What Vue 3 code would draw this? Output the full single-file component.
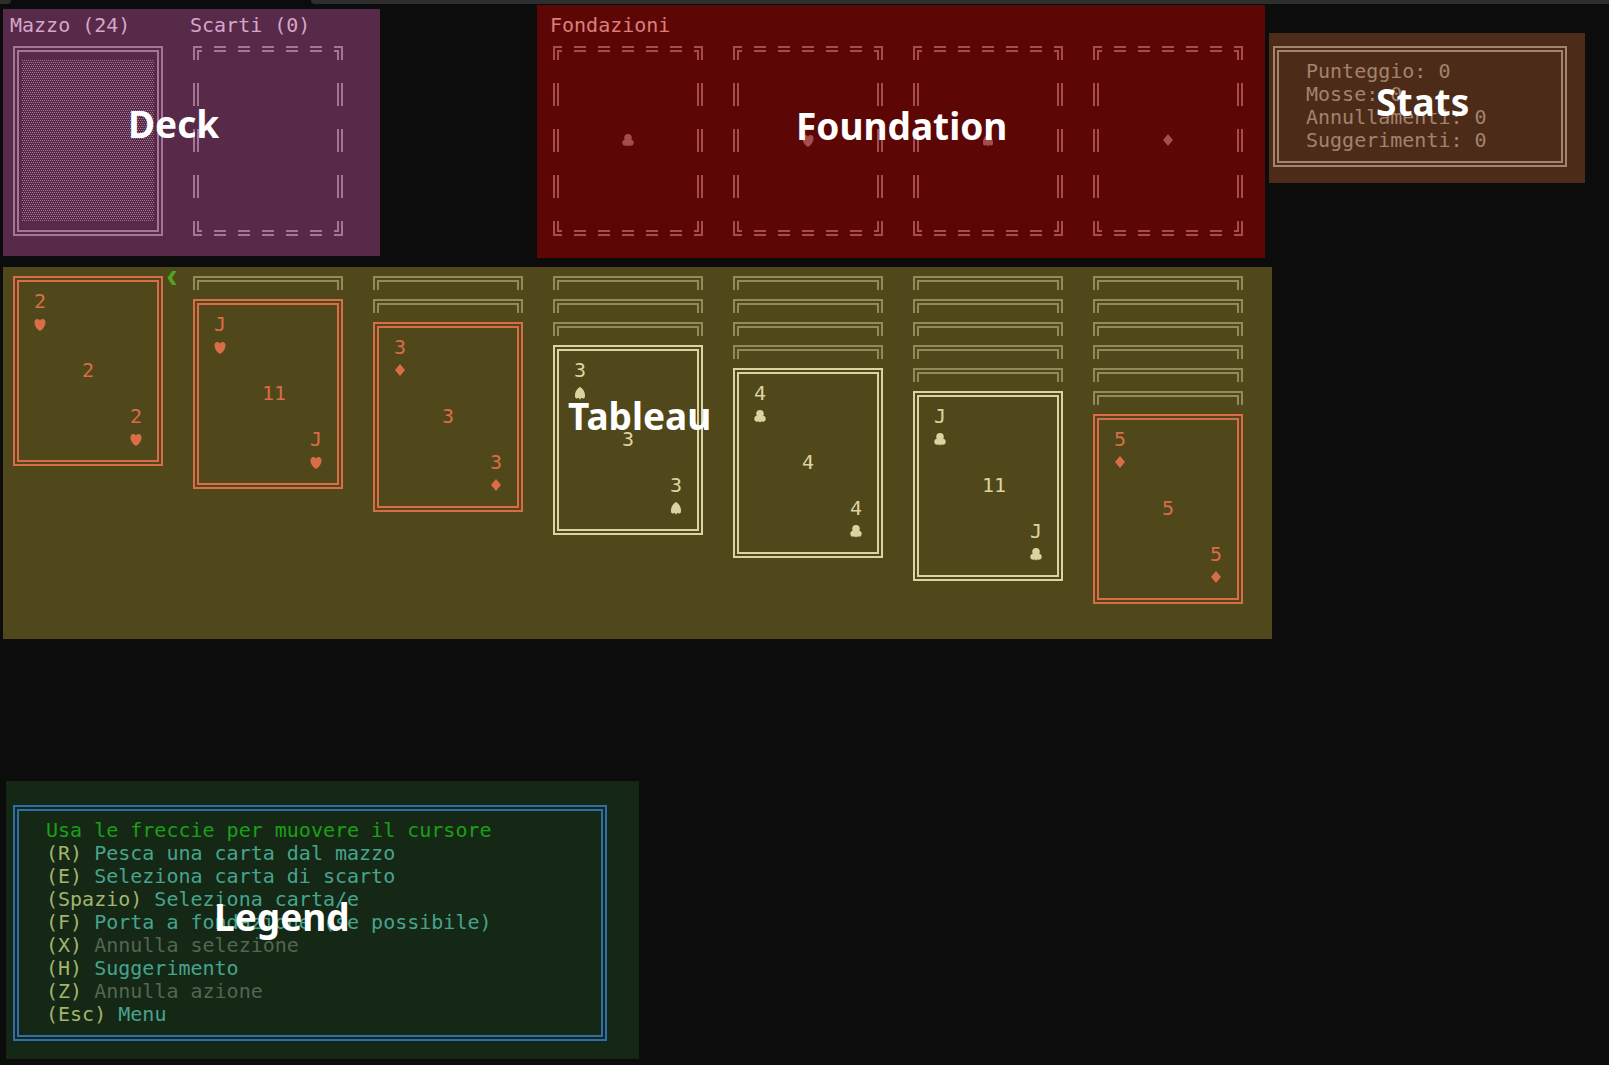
<script setup>
const foundations = ['club', 'heart', 'spade', 'diamond']

const columns = [
  { hidden: 0, rank: '2', value: '2', suit: 'heart' },
  { hidden: 1, rank: 'J', value: '11', suit: 'heart' },
  { hidden: 2, rank: '3', value: '3', suit: 'diamond' },
  { hidden: 3, rank: '3', value: '3', suit: 'spade' },
  { hidden: 4, rank: '4', value: '4', suit: 'club' },
  { hidden: 5, rank: 'J', value: '11', suit: 'club' },
  { hidden: 6, rank: '5', value: '5', suit: 'diamond' },
]

const stats = [
  ['Punteggio', 0],
  ['Mosse', 0],
  ['Annullamenti', 0],
  ['Suggerimenti', 0],
]

const commands = [
  { key: 'R', text: 'Pesca una carta dal mazzo' },
  { key: 'E', text: 'Seleziona carta di scarto' },
  { key: 'Spazio', text: 'Seleziona carta/e' },
  { key: 'F', text: 'Porta a fondazione (se possibile)' },
  { key: 'X', text: 'Annulla selezione', off: true },
  { key: 'H', text: 'Suggerimento' },
  { key: 'Z', text: 'Annulla azione', off: true },
  { key: 'Esc', text: 'Menu' },
]

const isRed = (suit) => suit === 'heart' || suit === 'diamond'

// Outline of an empty pile: double-line corners joined by dashes
const slotPath = [
  'M0 0H9V2H2V14H0ZM4 4H9V6H6V14H4Z',
  'M150 0H141V2H148V14H150ZM146 4H141V6H144V14H146Z',
  'M0 190H9V188H2V175H0ZM4 186H9V184H6V175H4Z',
  'M150 190H141V188H148V175H150ZM146 186H141V184H144V175H146Z',
  ...[21, 45, 69, 93, 117].flatMap((x) => [0, 4, 184, 188].map((y) => `M${x} ${y}h12v2h-12Z`)),
  ...[37, 83, 129].flatMap((y) => [0, 4, 144, 148].map((x) => `M${x} ${y}h2v23h-2Z`)),
].join('')

const suitPaths = {
  heart: 'M6 18C4.500 17.200 .5 14 .5 9.500C.5 7.200 1.600 6 3.200 6C4.600 6 5.600 6.600 6 7.600C6.400 6.600 7.400 6 8.800 6C10.400 6 11.500 7.200 11.500 9.500C11.500 14 7.500 17.200 6 18Z',
  diamond: 'M6 5L11 11L6 17L1 11Z',
  spade: 'M6 5C8.500 6.300 11 9.300 11 13.500C11 15.700 10.600 16.500 9.400 16.500C8.400 16.500 7.600 16.200 7 15.800L6.700 17.300H5.300L5 15.800C4.400 16.200 3.600 16.500 2.600 16.500C1.400 16.500 1 15.700 1 13.500C1 9.300 3.500 6.300 6 5Z',
  club: 'M2.200 8.800a3.800 3.800 0 1 1 7.600 0a3.800 3.800 0 1 1 -7.600 0ZM.3 13.700a3 3 0 1 1 6 0a3 3 0 1 1 -6 0ZM5.700 13.700a3 3 0 1 1 6 0a3 3 0 1 1 -6 0ZM5.300 12h1.400v5.200h-1.400Z',
}
</script>

<template>
  <div class="terminal">
    <div class="tabs"><span class="tab tab-left"></span><span class="tab tab-right"></span></div>

    <div class="top">
      <section class="panel deck">
        <div class="pile">
          <h2>Mazzo (24)</h2>
          <div class="card back">
            <svg class="weave">
              <defs>
                <pattern id="weave" width="2" height="4" patternUnits="userSpaceOnUse">
                  <path d="M0 0h1v1h-1ZM1 2h1v1h-1Z" />
                </pattern>
              </defs>
              <rect width="100%" height="100%" fill="url(#weave)" />
            </svg>
          </div>
        </div>
        <div class="pile">
          <h2>Scarti (0)</h2>
          <svg class="slot" viewBox="0 0 150 190"><path :d="slotPath" /></svg>
        </div>
        <strong class="tag">Deck</strong>
      </section>

      <section class="panel foundation">
        <h2>Fondazioni</h2>
        <div class="slots">
          <svg v-for="suit in foundations" :key="suit" class="slot" viewBox="0 0 150 190">
            <path :d="slotPath" />
            <path :d="suitPaths[suit]" transform="translate(69 83)" />
          </svg>
        </div>
        <strong class="tag">Foundation</strong>
      </section>

      <section class="panel stats">
        <ul class="frame">
          <li v-for="[name, count] in stats" :key="name">{{ name }}: {{ count }}</li>
        </ul>
        <strong class="tag">Stats</strong>
      </section>
    </div>

    <section class="panel tableau">
      <div v-for="(column, i) in columns" :key="i" class="column">
        <div v-for="n in column.hidden" :key="n" class="covered"></div>
        <div class="card face" :class="{ red: isRed(column.suit) }">
          <div class="corner">
            <span>{{ column.rank }}</span>
            <svg class="suit" viewBox="0 0 12 23"><path :d="suitPaths[column.suit]" /></svg>
          </div>
          <div class="value">{{ column.value }}</div>
          <div class="corner end">
            <span>{{ column.rank }}</span>
            <svg class="suit" viewBox="0 0 12 23"><path :d="suitPaths[column.suit]" /></svg>
          </div>
        </div>
        <svg v-if="i === 0" class="cursor" viewBox="0 0 12 23">
          <path d="M1.500 11L6 4H10.500L6 11L10.500 18H6Z" />
        </svg>
      </div>
      <strong class="tag">Tableau</strong>
    </section>

    <section class="panel legend">
      <ul class="frame">
        <li class="hint">Usa le freccie per muovere il cursore</li>
        <li v-for="c in commands" :key="c.key" :class="{ off: c.off }">
          <kbd>({{ c.key }})</kbd> {{ c.text }}
        </li>
      </ul>
      <strong class="tag">Legend</strong>
    </section>
  </div>
</template>

<style>
body {
  background: #0c0c0c;
}
</style>

<style scoped>
.terminal {
  display: flex;
  flex-direction: column;
  box-sizing: border-box;
  min-height: 100vh;
  padding-bottom: 6px;
  background: #0c0c0c;
  font: 20px/23px "DejaVu Sans Mono", "Liberation Mono", monospace;
}
.tabs {
  display: flex;
  gap: 300px;
  height: 4px;
}
.tab {
  background: #2e2e2e;
}
.tab-left {
  width: 11px;
  border-bottom-right-radius: 4px;
}
.tab-right {
  flex: 1;
  border-bottom-left-radius: 4px;
}
.top {
  display: flex;
  align-items: flex-start;
  padding-left: 3px;
}
.panel {
  position: relative;
  box-sizing: border-box;
  width: max-content;
}
h2 {
  margin: 0 0 9px;
  font: inherit;
  white-space: nowrap;
}
ul {
  margin: 0;
  padding: 0;
  list-style: none;
}
li {
  white-space: nowrap;
}
kbd {
  font: inherit;
}
svg {
  display: block;
  fill: currentColor;
}
.tag {
  position: absolute;
  color: #fff;
  font: bold 37px/40px "Noto Sans", "Open Sans", sans-serif;
}

.card {
  box-sizing: border-box;
  width: 150px;
  height: 190px;
  border: 6px double;
}
.slot {
  width: 150px;
  height: 190px;
}
.frame {
  border: 6px double;
  padding: 8px 0 9px 27px;
}

.deck {
  display: flex;
  margin-top: 5px;
  padding: 5px 10px 20px 7px;
  background: #562a48;
  color: #a47694;
}
.deck .pile {
  width: 180px;
}
.deck h2 {
  color: #d6a5c9;
}
.deck .card,
.deck .slot {
  margin-left: 3px;
}
.back {
  padding: 8px 3px 9px;
}
.weave {
  width: 100%;
  height: 100%;
  shape-rendering: crispEdges;
}
.deck .tag {
  left: 125px;
  top: 95px;
}

.foundation {
  margin: 1px 4px 0 157px;
  padding: 9px 22px 22px 13px;
  background: #5d0606;
  color: #a64c4b;
}
.foundation h2 {
  color: #db7f7a;
}
.slots {
  display: flex;
  gap: 30px;
  padding-left: 3px;
}
.foundation .tag {
  left: 259px;
  top: 101px;
}

.stats {
  margin-top: 29px;
  padding: 13px 18px 16px 4px;
  background: #4c2c19;
  color: #a3836c;
}
.stats .frame {
  padding-right: 74px;
}
.stats .tag {
  left: 107px;
  top: 49px;
}

.tableau {
  display: flex;
  gap: 30px;
  margin: 9px 0 0 3px;
  padding: 9px 29px 35px 10px;
  background: #50481a;
  color: #ddd3a1;
}
.column {
  position: relative;
}
.covered {
  height: 8px;
  margin-bottom: 9px;
  border: 6px double #95895a;
  border-bottom: 0;
}
.face {
  display: flex;
  flex-direction: column;
  gap: 23px;
  padding: 8px 15px;
}
.red {
  color: #d86d47;
}
.suit,
.cursor {
  width: 12px;
  height: 23px;
}
.corner {
  display: flex;
  flex-direction: column;
  align-items: flex-start;
}
.end {
  align-items: flex-end;
}
.value {
  padding-left: 48px;
}
.cursor {
  position: absolute;
  left: 153px;
  top: -9px;
  color: #53a31c;
}
.tableau .tag {
  left: 565px;
  top: 129px;
}

.legend {
  margin: auto 0 0 6px;
  padding: 24px 32px 18px 7px;
  background: #152815;
  color: #46a48e;
}
.legend .frame {
  padding-right: 109px;
  border-color: #2f6dab;
}
.legend kbd {
  color: #a3b56d;
}
.hint {
  color: #1aa016;
}
.off {
  color: #526650;
}
.legend .tag {
  left: 208px;
  top: 116px;
}
</style>
